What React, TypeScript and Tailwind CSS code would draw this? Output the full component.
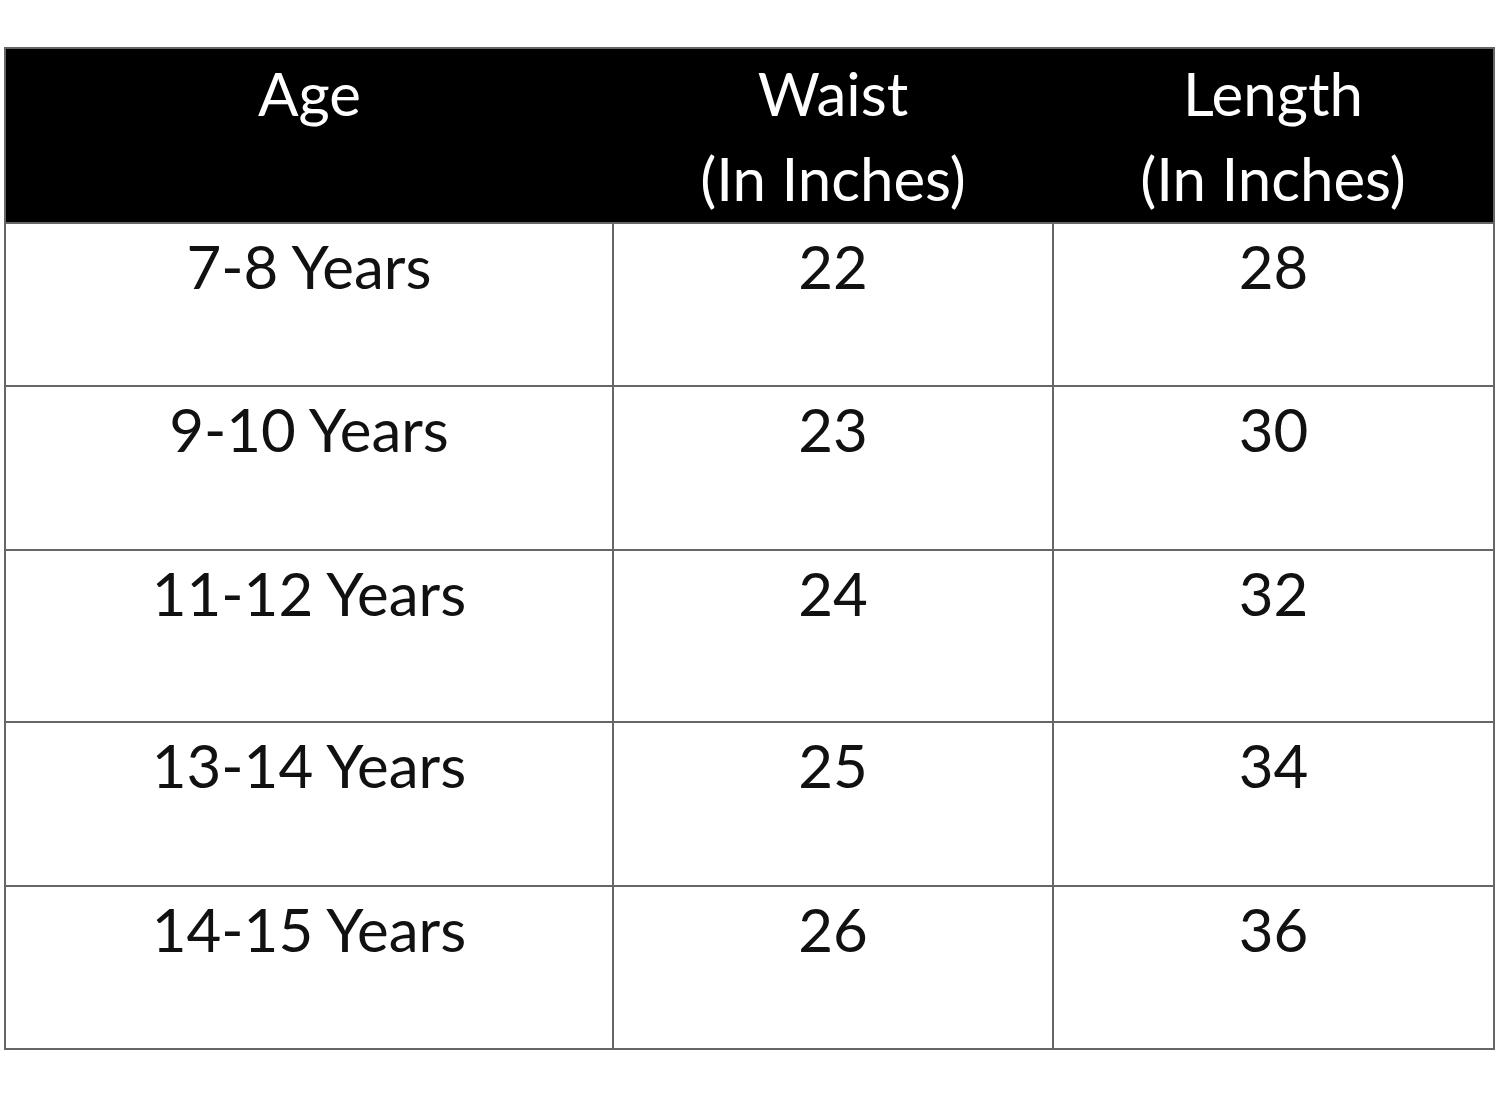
const rows = [
  { age: '7-8 Years', waist: '22', length: '28', h: 'h-[163px]' },
  { age: '9-10 Years', waist: '23', length: '30', h: 'h-[164px]' },
  { age: '11-12 Years', waist: '24', length: '32', h: 'h-[172px]' },
  { age: '13-14 Years', waist: '25', length: '34', h: 'h-[164px]' },
  { age: '14-15 Years', waist: '26', length: '36', h: 'h-[163px]' },
];

export default function App() {
  return (
    <div className="min-h-[1100px] w-[1500px] bg-white pt-[47px] pl-[4px] font-['Lato','Open_Sans',sans-serif]">
      <table className="w-[1489px] table-fixed border-collapse">
        <colgroup>
          <col className="w-[608px]" />
          <col className="w-[440px]" />
          <col className="w-[441px]" />
        </colgroup>
        <thead>
          <tr className="h-[175px] bg-black text-white">
            <th className="border-2 border-[#666] border-r-0 align-top pt-[2px] text-[60px] font-normal leading-[85px]">Age</th>
            <th className="border-y-2 border-[#666] align-top pt-[2px] text-[60px] font-normal leading-[85px]">
              Waist<br />(In Inches)
            </th>
            <th className="border-2 border-[#666] border-l-0 align-top pt-[2px] text-[60px] font-normal leading-[85px]">
              Length<br />(In Inches)
            </th>
          </tr>
        </thead>
        <tbody className="text-[#111]">
          {rows.map((r) => (
            <tr key={r.age} className={r.h}>
              <td className="border-2 border-[#666] align-top pt-0 text-center text-[60px] leading-[85px]">{r.age}</td>
              <td className="border-2 border-[#666] align-top pt-0 text-center text-[60px] leading-[85px]">{r.waist}</td>
              <td className="border-2 border-[#666] align-top pt-0 text-center text-[60px] leading-[85px]">{r.length}</td>
            </tr>
          ))}
        </tbody>
      </table>
    </div>
  );
}
